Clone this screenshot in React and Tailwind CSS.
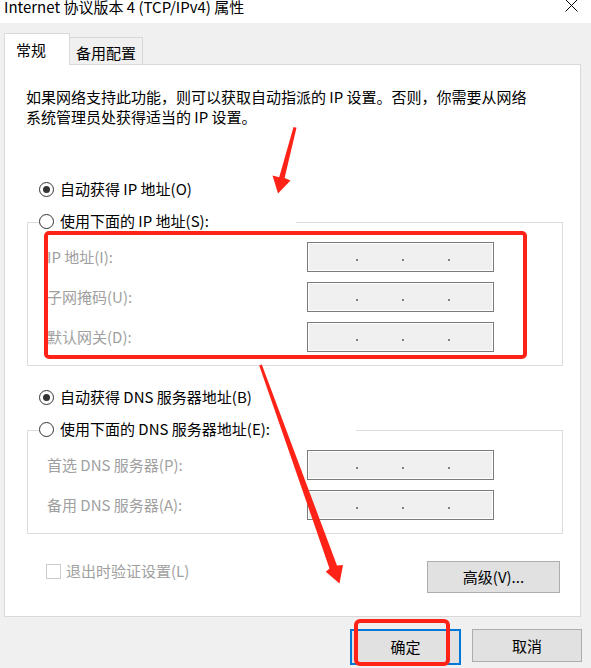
import React from "react";

function Radio({ checked }) {
  return (
    <span className="w-[15px] h-[15px] rounded-full border border-[#333333] bg-white flex items-center justify-center shrink-0">
      {checked && <span className="w-[7px] h-[7px] rounded-full bg-[#333333]" />}
    </span>
  );
}

function IpBox() {
  return (
    <div className="w-[187px] h-[30px] border border-[#7a7a7a] bg-[#f0f0f0] shadow-[inset_0_0_0_1px_#ffffff] flex items-start pl-[48px] pt-[16px] gap-[44px]">
      <span className="w-[2px] h-[2px] bg-[#808080]" />
      <span className="w-[2px] h-[2px] bg-[#808080]" />
      <span className="w-[2px] h-[2px] bg-[#808080]" />
    </div>
  );
}

function FieldRow({ label }) {
  return (
    <div className="flex items-center h-[30px]">
      <div className="w-[279px] pl-[19px] text-[#a0a0a0] leading-[20px]">{label}</div>
      <IpBox />
    </div>
  );
}

function Group({ legend, legendWidth, children }) {
  return (
    <div className="ml-[22px] w-[536px] border border-[#dcdcdc] pb-[13px]">
      <div
        className={`-mt-[12px] ml-[11px] h-[20px] bg-white flex items-center gap-[6px] ${legendWidth}`}
      >
        <Radio checked={false} />
        <span className="leading-[20px] text-black">{legend}</span>
      </div>
      <div className="mt-[11px] flex flex-col gap-[10px]">{children}</div>
    </div>
  );
}

export default function App() {
  return (
    <div className="relative w-[591px] h-[668px] overflow-hidden bg-[#f0f0f0] text-[15px] text-black font-['Noto_Sans_CJK_SC','Noto_Sans',sans-serif]">
      {/* Title bar */}
      <div className="h-[23px] bg-white flex justify-between">
        <div className="pl-[4px] leading-[13px] whitespace-nowrap">Internet 协议版本 4 (TCP/IPv4) 属性</div>
        <svg className="mr-[13px] -mt-[1px]" width="13" height="13" viewBox="0 0 13 13">
          <path d="M0.5 0.5 L12.5 12.5 M12.5 0.5 L0.5 12.5" stroke="#000" strokeWidth="1" fill="none" />
        </svg>
      </div>

      {/* Tabs */}
      <div className="flex items-end pl-[4px] pt-[10px]">
        <div className="relative z-10 -mb-px w-[66px] h-[32px] bg-white border-l border-t border-r border-[#d9d9d9] pl-[11px] pt-[6px] leading-[20px]">
          常规
        </div>
        <div className="w-[73px] h-[27px] border-t border-r border-[#d9d9d9] px-[6px] pt-[5px] leading-[20px]">
          备用配置
        </div>
      </div>

      {/* Panel */}
      <div className="ml-[4px] w-[577px] bg-white border border-[#d9d9d9] pb-[23px]">
        <p className="mt-[22px] pl-[21px] leading-[20px] whitespace-nowrap">
          如果网络支持此功能，则可以获取自动指派的 IP 设置。否则，你需要从网络
          <br />
          系统管理员处获得适当的 IP 设置。
        </p>

        <div className="mt-[52px] ml-[34px] h-[20px] flex items-center gap-[6px]">
          <Radio checked />
          <span className="leading-[20px]">自动获得 IP 地址(O)</span>
        </div>

        <div className="mt-[23px]">
          <Group legend="使用下面的 IP 地址(S):" legendWidth="w-[257px]">
            <FieldRow label="IP 地址(I):" />
            <FieldRow label="子网掩码(U):" />
            <FieldRow label="默认网关(D):" />
          </Group>
        </div>

        <div className="mt-[21px] ml-[34px] h-[20px] flex items-center gap-[6px]">
          <Radio checked />
          <span className="leading-[20px]">自动获得 DNS 服务器地址(B)</span>
        </div>

        <div className="mt-[23px]">
          <Group legend="使用下面的 DNS 服务器地址(E):" legendWidth="w-[317px]">
            <FieldRow label="首选 DNS 服务器(P):" />
            <FieldRow label="备用 DNS 服务器(A):" />
          </Group>
        </div>

        <div className="mt-[27px] flex items-start">
          <div className="ml-[41px] h-[20px] flex items-center gap-[5px]">
            <span className="w-[15px] h-[15px] border border-[#cccccc] bg-white" />
            <span className="text-[#a0a0a0] leading-[20px]">退出时验证设置(L)</span>
          </div>
          <button className="ml-auto mr-[20px] w-[133px] h-[32px] bg-[#e1e1e1] border border-[#adadad] leading-[20px]">
            高级(V)...
          </button>
        </div>
      </div>

      {/* Dialog buttons */}
      <div className="mt-[12px] pl-[350px] flex items-start gap-[11px]">
        <button className="w-[111px] h-[36px] bg-[#e1e1e1] border-2 border-[#0078d7] leading-[20px]">确定</button>
        <button className="w-[110px] h-[33px] bg-[#e1e1e1] border border-[#adadad] leading-[20px]">取消</button>
      </div>

      {/* Annotations */}
      <div className="absolute left-[44px] top-[231px] w-[483px] h-[128px] border-4 border-[#ff2317] rounded-[5px] pointer-events-none" />
      <div className="absolute left-[354px] top-[619px] w-[96px] h-[47px] border-4 border-[#ff2317] rounded-[6px] pointer-events-none" />
      <svg className="absolute left-0 top-0 pointer-events-none" width="591" height="668" viewBox="0 0 591 668">
        <polygon
          fill="#ff2317"
          points="293.5,127 296.5,127.8 284.6,178 290.5,180.5 278,193.5 272.5,175.5 279.2,177.3"
        />
        <polygon
          fill="#ff2317"
          points="259.2,365.4 261.8,364.6 337,565.6 343,565 339.5,583.5 325.8,571.8 329.5,568.4"
        />
      </svg>
    </div>
  );
}
